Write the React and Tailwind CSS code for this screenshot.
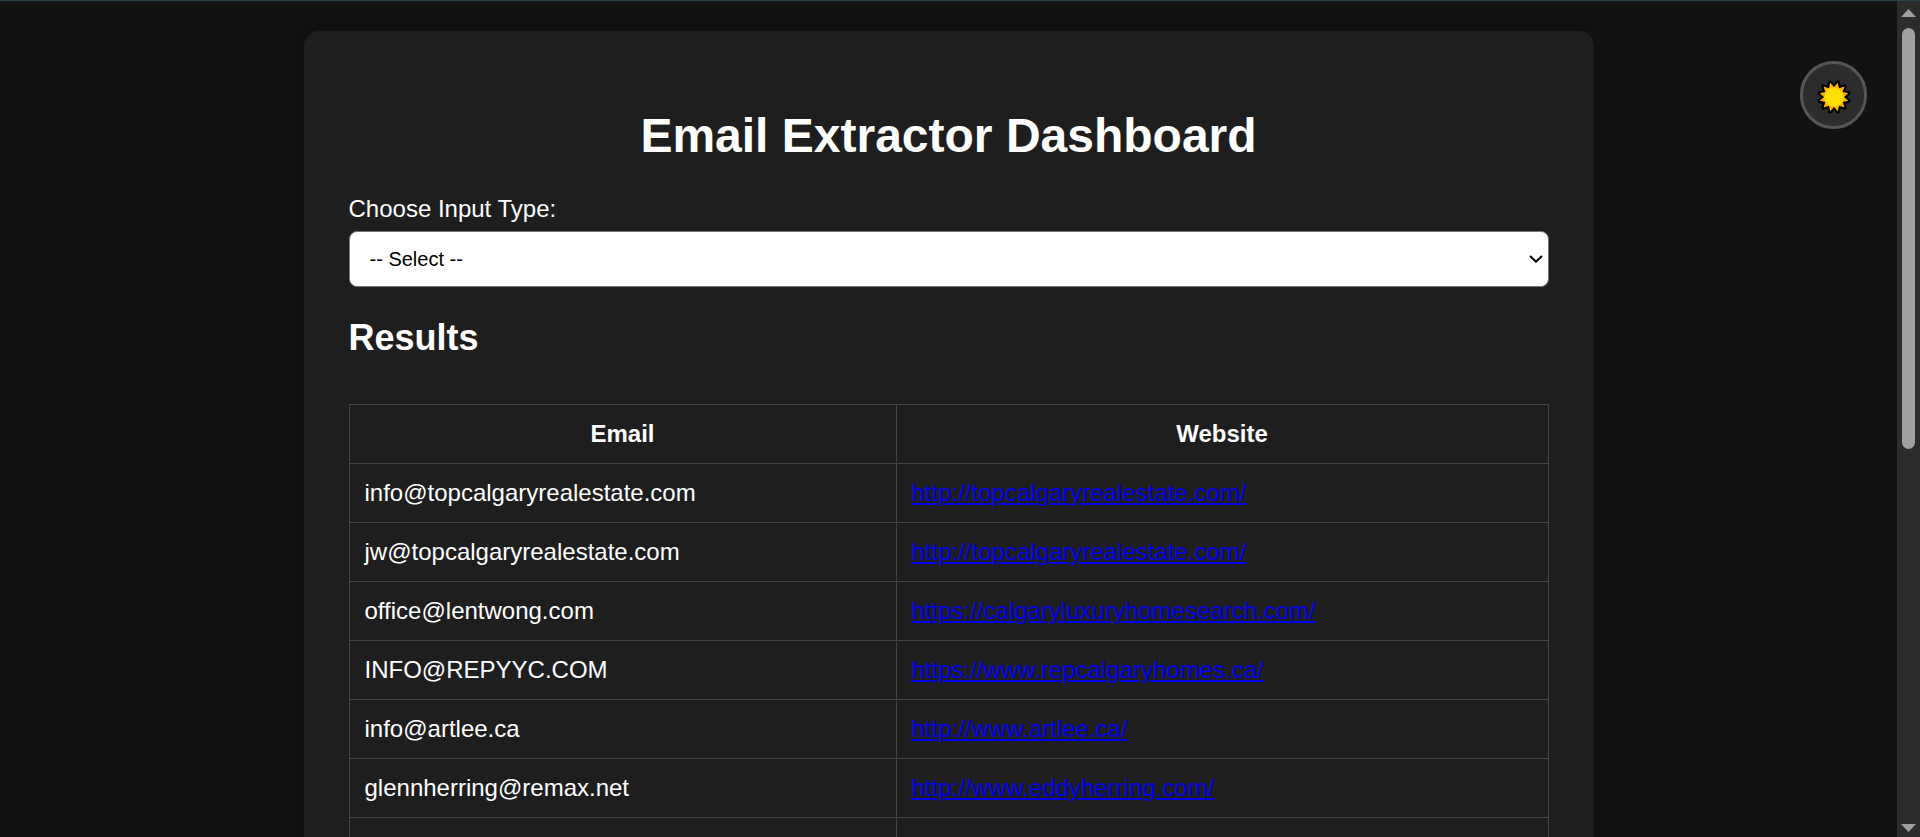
import React from "react";

const rows = [
  ["info@topcalgaryrealestate.com", "http://topcalgaryrealestate.com/"],
  ["jw@topcalgaryrealestate.com", "http://topcalgaryrealestate.com/"],
  ["office@lentwong.com", "https://calgaryluxuryhomesearch.com/"],
  ["INFO@REPYYC.COM", "https://www.repcalgaryhomes.ca/"],
  ["info@artlee.ca", "http://www.artlee.ca/"],
  ["glennherring@remax.net", "http://www.eddyherring.com/"],
];

// Twelve-pointed star outline centred on (17, 17).
const star = Array.from({ length: 24 }, (_, i) => {
  const r = i % 2 === 0 ? 14.8 : 10;
  const a = (Math.PI / 12) * (i + 1);
  return `${(17 + r * Math.sin(a)).toFixed(2)},${(17 - r * Math.cos(a)).toFixed(2)}`;
}).join(" ");

function SunIcon() {
  return (
    <svg width="34" height="34" viewBox="0 0 34 34" className="mt-[3px] shrink-0" aria-hidden="true">
      <polygon points={star} fill="#000" stroke="#000" strokeWidth="4.4" strokeLinejoin="round" />
      <polygon points={star} fill="#ffb300" />
      <circle cx="17" cy="17" r="9.6" fill="#ffe000" />
    </svg>
  );
}

function Scrollbar() {
  return (
    <div className="flex w-[23px] shrink-0 flex-col items-center bg-[#2c2c2c] pt-2 pb-[5px]" aria-hidden="true">
      <svg width="15" height="8" viewBox="0 0 15 8" className="shrink-0">
        <path d="M0 8 7.5 0 15 8Z" fill="#9f9f9f" />
      </svg>
      <div className="flex w-full grow flex-col items-center py-[11px]">
        <div className="h-[421px] w-[13px] rounded-full bg-[#9f9f9f]" />
      </div>
      <svg width="15" height="8" viewBox="0 0 15 8" className="shrink-0">
        <path d="M0 0 7.5 8 15 0Z" fill="#9f9f9f" />
      </svg>
    </div>
  );
}

export default function App() {
  return (
    <div className="flex h-screen border-t border-[#2a4148] bg-[#121212] font-['Liberation_Sans',Arial,sans-serif] text-2xl leading-7 text-white">
      <div className="min-w-0 grow overflow-hidden">
        <main className="mx-auto mt-[30px] w-full max-w-[1290px] rounded-[15px] bg-[#1e1e1e] p-[45px] shadow-[0_0_15px_rgba(0,0,0,0.1)]">
          <h1 className="mt-[33px] mb-8 text-center text-5xl leading-[54px] font-bold">Email Extractor Dashboard</h1>
          <label htmlFor="input-type" className="block">
            Choose Input Type:
          </label>
          <div className="mt-2 grid items-center">
            <select
              id="input-type"
              className="col-start-1 row-start-1 block h-14 w-full appearance-none rounded-lg border border-[#767676] bg-white px-5 text-xl text-black"
            >
              <option>-- Select --</option>
            </select>
            <svg
              width="14"
              height="8"
              viewBox="0 0 14 8"
              className="pointer-events-none col-start-1 row-start-1 mr-1.5 justify-self-end"
              aria-hidden="true"
            >
              <path d="M1 1 7 6.7 13 1" fill="none" stroke="#000" strokeWidth="2" />
            </svg>
          </div>
          <h2 className="mt-[30px] text-4xl leading-[42px] font-bold">Results</h2>
          <table className="mt-[45px] w-full border-collapse">
            <thead>
              <tr>
                <th className="w-[547px] border border-[#444] p-[15px]">Email</th>
                <th className="border border-[#444] p-[15px]">Website</th>
              </tr>
            </thead>
            <tbody>
              {[...rows, ["", ""]].map(([email, site], i) => (
                <tr key={i} className="h-[59px]">
                  <td className="border border-[#444] p-[15px]">{email}</td>
                  <td className="border border-[#444] p-[15px]">
                    {site && (
                      <a href={site} className="text-[#0000ee] underline">
                        {site}
                      </a>
                    )}
                  </td>
                </tr>
              ))}
            </tbody>
          </table>
        </main>
      </div>
      <button
        type="button"
        aria-label="Switch to light theme"
        className="fixed top-[61px] right-[53px] flex h-[68px] w-[67px] items-center justify-center rounded-full border-3 border-[#555] bg-[#2c2c2c]"
      >
        <SunIcon />
      </button>
      <Scrollbar />
    </div>
  );
}
